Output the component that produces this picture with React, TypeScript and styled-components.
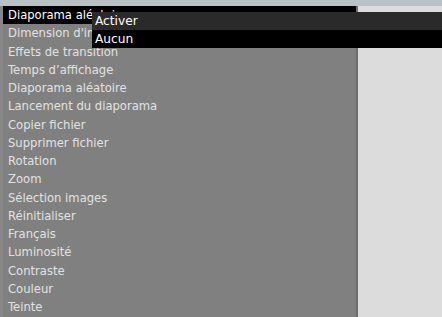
import styled, { createGlobalStyle } from "styled-components";

const GlobalStyle = createGlobalStyle`
  html, body {
    margin: 0;
    padding: 0;
    background: #dcdcdc;
    overflow: hidden;
  }
  body {
    font-family: "DejaVu Sans", "Liberation Sans", sans-serif;
  }
`;

const items = [
  "Diaporama aléatoire",
  "Dimension d'images",
  "Effets de transition",
  "Temps d’affichage",
  "Diaporama aléatoire",
  "Lancement du diaporama",
  "Copier fichier",
  "Supprimer fichier",
  "Rotation",
  "Zoom",
  "Sélection images",
  "Réinitialiser",
  "Français",
  "Luminosité",
  "Contraste",
  "Couleur",
  "Teinte",
];

const Screen = styled.div`
  position: relative;
  width: 442px;
  height: 317px;
  display: flex;
  flex-direction: column;
  overflow: hidden;
  background: #dcdcdc;
`;

const TopStrip = styled.div`
  height: 6px;
  flex-shrink: 0;
  background: #b9c3c5;
`;

const Body = styled.div`
  display: flex;
  flex: 1;
`;

const Panel = styled.div`
  width: 353px;
  background: #808080;
  border-left: 3px solid #878787;
  border-right: 2px solid #6e6e6e;
  display: flex;
  flex-direction: column;
`;

const Item = styled.div<{ $active?: boolean }>`
  height: 18.25px;
  line-height: 19px;
  padding-left: 5px;
  font-size: 11.6px;
  white-space: nowrap;
  overflow: hidden;
  color: ${(p) => (p.$active ? "#ffffff" : "#e2e2e2")};
  background: ${(p) => (p.$active ? "#000000" : "transparent")};
`;

const Popup = styled.div`
  position: absolute;
  left: 92px;
  right: 0;
  top: 12px;
  display: flex;
  flex-direction: column;
`;

const PopupRow = styled.div<{ $focus?: boolean }>`
  height: 18px;
  line-height: 19px;
  padding-left: 3px;
  font-size: 12.2px;
  color: #ffffff;
  background: ${(p) => (p.$focus ? "#2a2a2a" : "#000000")};
`;

export default function App() {
  return (
    <>
      <GlobalStyle />
      <Screen>
        <TopStrip />
        <Body>
          <Panel>
            {items.map((label, i) => (
              <Item key={i} $active={i === 0}>
                {label}
              </Item>
            ))}
          </Panel>
        </Body>
        <Popup>
          <PopupRow $focus>Activer</PopupRow>
          <PopupRow>Aucun</PopupRow>
        </Popup>
      </Screen>
    </>
  );
}
